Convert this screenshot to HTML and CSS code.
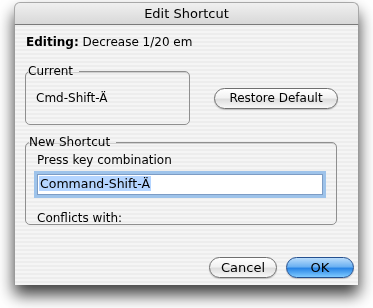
FILE: index.html
```html
<!DOCTYPE html>
<html lang="en">

<head>
	<meta charset="UTF-8">
	<title>Edit Shortcut</title>
	<link rel="stylesheet" href="styles.css">
</head>

<body>
	<div class="window">
		<div class="titlebar">Edit Shortcut</div>
		<div class="content">
			<div class="editing"><b>Editing:</b> Decrease 1/20 em</div>
			<div class="top-row">
				<fieldset class="group current">
					<legend>Current</legend>
					<div class="current-value">Cmd-Shift-Ä</div>
				</fieldset>
				<button class="aqua restore">Restore Default</button>
			</div>
			<fieldset class="group new-shortcut">
				<legend>New Shortcut</legend>
				<div class="hint">Press key combination</div>
				<div class="field"><span class="selected">Command-Shift-Ä</span></div>
				<div class="conflicts">Conflicts with:</div>
			</fieldset>
			<div class="actions">
				<button class="aqua">Cancel</button>
				<button class="aqua default">OK</button>
			</div>
		</div>
	</div>
</body>

</html>
```

FILE: styles.css
```css
	body {
		margin: 0;
		padding: 2px 14px 0;
		min-height: 306px;
		background-color: white;
		font-family: "DejaVu Sans", sans-serif;
		font-size: 12px;
		color: #000;
	}

	.window {
		width: 345px;
		height: 283px;
		border-radius: 6px 6px 0 0;
		filter: drop-shadow(0 10px 8px rgba(0, 0, 0, 0.75));
		display: flex;
		flex-direction: column;
	}

	.titlebar {
		height: 21px;
		line-height: 21px;
		font-size: 13px;
		text-align: center;
		background: linear-gradient(#f0f0f0, #d8d8d8);
		border: 1px solid #a8a8a8;
		border-bottom-color: #7a7a7a;
		border-radius: 6px 6px 0 0;
	}

	.content {
		flex: 1;
		padding: 9px 4px 7px 10px;
		background: repeating-linear-gradient(#ededed 0 2px, #f5f5f5 2px 4px);
		border-left: 1px solid #9a9a9a;
		border-right: 1px solid #9a9a9a;
		display: flex;
		flex-direction: column;
	}

	.editing {
		line-height: 16px;
		padding-left: 1px;
	}

	.top-row {
		display: flex;
		align-items: center;
		margin-top: 13px;
	}

	.group {
		margin: 0;
		padding: 0 10px;
		border: 1px solid #8f8f8f;
		border-radius: 5px;
		box-shadow: inset 0 1px 0 #d0d0d0;
	}

	.group legend {
		padding: 0 6px 0 0;
		margin-left: -8px;
		line-height: 16px;
	}

	.current {
		width: 165px;
		height: 62px;
		box-sizing: border-box;
	}

	.current-value {
		margin-top: 12px;
	}

	.aqua {
		font-family: inherit;
		font-size: 12px;
		height: 21px;
		padding: 0;
		white-space: nowrap;
		border: 1px solid #6f6f6f;
		border-radius: 11px;
		background: linear-gradient(#ffffff 0%, #f2f2f2 45%, #dedede 55%, #f8f8f8 100%);
		box-shadow: 0 1px 1px rgba(0, 0, 0, 0.2);
		color: #000;
	}

	.restore {
		width: 124px;
		margin-left: 24px;
		margin-top: 8px;
	}

	.new-shortcut {
		width: 312px;
		height: 91px;
		box-sizing: border-box;
		margin-top: 9px;
		padding: 0 0 0 11px;
	}

	.hint {
		margin-top: 2px;
		line-height: 16px;
	}

	.field {
		width: 286px;
		height: 21px;
		margin: 6px 0 0 0;
		box-sizing: border-box;
		background: white;
		border: 1px solid #7d9cc4;
		box-shadow: 0 0 0 3px #9ec3ea;
		font-size: 12.5px;
		line-height: 16px;
		padding: 1px 0 0 1px;
	}

	.selected {
		background: #b5d5ff;
		padding: 0 1px;
	}

	.conflicts {
		margin-top: 15px;
		line-height: 16px;
	}

	.actions {
		margin-top: auto;
		display: flex;
		justify-content: flex-end;
		gap: 9px;
	}

	.actions .aqua {
		width: 68px;
		height: 21px;
		font-size: 13px;
	}

	.aqua.default {
		border-color: #25508f;
		background: linear-gradient(#b9dcfb 0%, #6db2f2 45%, #2a86e6 55%, #7fcaff 100%);
	}
```
